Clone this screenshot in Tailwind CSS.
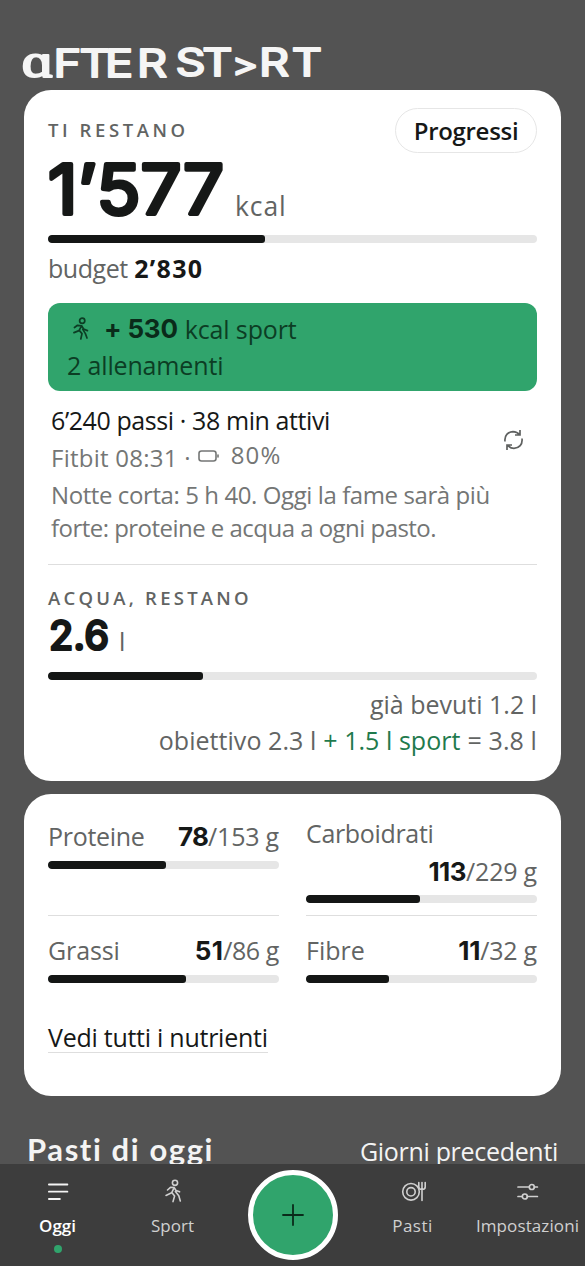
<!DOCTYPE html>
<html lang="it">
<head>
<meta charset="utf-8">
<title>After Start</title>
<script src="https://cdn.jsdelivr.net/npm/@tailwindcss/browser@4"></script>
</head>
<body class="bg-[#535353]">
<div class="relative h-[1266px] w-[585px] overflow-hidden bg-[#535353] font-['Open_Sans',sans-serif] text-[25px] text-[#626463]">

  <header class="h-[90px]">
    <svg class="block" width="585" height="90" viewBox="0 0 585 90" role="img" aria-label="After Start">
      <g transform="scale(1.25 1)" fill="#f5f5f5" stroke="#f5f5f5" stroke-width="1.9" stroke-linejoin="round" font-family="Inter" font-weight="400" font-size="37.500">
        <text y="76.8" x="17.4 42.9 63.7 84.1 109.7"><tspan font-family="Open Sans" font-size="49">ɑ</tspan>FTER</text>
        <text y="75.6" x="140.4 161.9 185.4 207.3 233.5">ST<tspan font-size="32">&gt;</tspan>RT</text>
      </g>
    </svg>
  </header>

  <main class="px-6">
    <section class="h-[691px] rounded-[27px] bg-white px-6 pt-[18px]">
      <div class="flex h-[45px] items-start justify-between">
        <h2 class="text-[18.5px] leading-[43px] font-semibold tracking-[3.57px]">TI RESTANO</h2>
        <button class="flex h-[45px] w-[142px] items-center justify-center rounded-full border-[1.5px] border-[#e6e6e6] text-[24px] font-semibold tracking-[-0.3px] text-[#161817]">Progressi</button>
      </div>
      <div class="flex h-[82px] items-start">
        <svg width="187" height="74" viewBox="0 0 187 74">
          <text x="0" y="61" textLength="176" lengthAdjust="spacingAndGlyphs" font-family="Inter" font-weight="400" font-size="69" fill="#161817" stroke="#161817" stroke-width="4" stroke-linejoin="round">1’577</text>
        </svg>
        <span class="mt-[26px] text-[26.5px] leading-[54px] tracking-[0.9px]">kcal</span>
      </div>
      <div class="h-2 overflow-hidden rounded-[4px] bg-[#e6e6e6]"><div class="h-full rounded-[3px] bg-[#141615]" style="width:216.5px"></div></div>
      <p class="mt-2 leading-[34px]"><span class="tracking-[-0.45px]">budget</span> <b class="tracking-[1.3px] text-[#161817]">2’830</b></p>

      <div class="mt-[18px] h-[88px] rounded-[12px] bg-[#30a46c] pt-2 pl-[18px] text-[#0c3d24]">
        <div class="flex items-center leading-[36px]">
          <svg class="mr-[13px] ml-[7px]" width="18" height="24" viewBox="0 0 18 24" fill="none" stroke="#0c3d24" stroke-width="1.7" stroke-linecap="round" stroke-linejoin="round"><circle cx="9.200" cy="3.800" r="2.600"/><path d="M1.500 10.500 4.500 8.300 8.600 8.800 10.600 12 14.400 13.600M8.600 8.800 6 13.600 1 15.600M6.200 13.400 9 16.600 7.800 22M9.800 12.400 12.400 16.600 14 21"/></svg>
          <b class="mr-[7px] font-[Inter] text-[26px] tracking-[-0.2px] text-[#0a2b1a]">+ 530</b><span class="tracking-[-0.14px]">kcal sport</span>
        </div>
        <p class="pl-px leading-[37px] tracking-[-0.15px]">2 allenamenti</p>
      </div>

      <div class="mt-[11px] flex items-center justify-between pl-[3px]">
        <div>
          <p class="leading-[36px] tracking-[-0.41px] text-[#161817]">6’240 passi · 38 min attivi</p>
          <div class="flex items-start text-[24px] leading-[40px] text-[#747675]">
            <span class="tracking-[0.25px]">Fitbit 08:31 ·</span>
            <svg class="mt-[12px] ml-[7px]" width="22" height="13" viewBox="0 0 22 13" fill="none" stroke="#747675" stroke-width="1.6" stroke-linecap="round"><rect x="1" y="1" width="17" height="10" rx="2.500"/><path d="M20 5v2"/></svg>
            <span class="-mt-[3px] ml-[11px] tracking-[1.1px]">80%</span>
          </div>
        </div>
        <svg class="mr-[13px]" width="21" height="22" viewBox="0 0 21 22" fill="none" stroke="#5f6160" stroke-width="1.7"><path d="M2 12.500C1.200 6.500 5 2.900 10 2.700c3 0 5 1.200 6.800 3.300M17 1v5h-5M19 9.500C19.800 15.500 16 19.100 11 19.300c-3 0-5-1.200-6.800-3.300M4 21v-5h5"/></svg>
      </div>
      <p class="pl-[3px] text-[24px] leading-[33px] text-[#747675]"><span class="tracking-[-0.41px]">Notte corta: 5 h 40. Oggi la fame sarà più</span><br><span class="tracking-[-0.53px]">forte: proteine e acqua a ogni pasto.</span></p>

      <div class="mt-5 h-px bg-[#dedede]"></div>
      <h2 class="mt-5 text-[18.5px] leading-[26px] font-semibold tracking-[3.25px]">ACQUA, RESTANO</h2>
      <div class="flex h-[61px] items-start">
        <svg width="70" height="50" viewBox="0 0 70 50">
          <text x="1" y="38.500" textLength="60" lengthAdjust="spacingAndGlyphs" font-family="Inter" font-weight="500" font-size="41" fill="#161817" stroke="#161817" stroke-width="2.200" stroke-linejoin="round">2.6</text>
        </svg>
        <span class="mt-[12px] ml-px text-[25px] leading-[36px]">l</span>
      </div>
      <div class="h-2 overflow-hidden rounded-[4px] bg-[#e6e6e6]"><div class="h-full rounded-[3px] bg-[#141615]" style="width:154.5px"></div></div>
      <div class="mt-[6px] flex flex-col items-end leading-[36px]">
        <p>già bevuti 1.2 l</p>
        <p class="flex gap-[7px]"><span class="tracking-[0.05px]">obiettivo 2.3 l</span><span class="tracking-[0.05px] text-[#1f7a4d]">+ 1.5 l sport</span><span class="tracking-[0.1px]">= 3.8 l</span></p>
      </div>
    </section>

    <section class="mt-[13px] h-[302px] rounded-[27px] bg-white px-6">
      <div class="grid grid-cols-2 gap-x-[27px]">
        <div class="h-[122px] border-b border-[#dedede] pt-[24px]">
          <div class="flex h-[36px] justify-between leading-[36px]"><span class="tracking-[-0.3px]">Proteine</span><span><b class="font-[Inter] text-[26px] tracking-[-0.8px] text-[#161817]">78</b><span class="tracking-[-0.2px]">/153 g</span></span></div>
          <div class="mt-[7px] h-2 overflow-hidden rounded-[4px] bg-[#e6e6e6]"><div class="h-full rounded-[3px] bg-[#141615]" style="width:117.5px"></div></div>
        </div>
        <div class="h-[122px] border-b border-[#dedede] pt-[21px]">
          <p class="h-[38px] leading-[37px] tracking-[-0.33px]">Carboidrati</p>
          <p class="h-[37px] text-right leading-[37px]"><b class="font-[Inter] text-[26px] tracking-[-0.500px] text-[#161817]">113</b><span class="tracking-[-0.2px]">/229 g</span></p>
          <div class="mt-[5px] h-2 overflow-hidden rounded-[4px] bg-[#e6e6e6]"><div class="h-full rounded-[3px] bg-[#141615]" style="width:114px"></div></div>
        </div>
        <div class="pt-[16px]">
          <div class="flex h-[36px] justify-between leading-[36px]"><span class="tracking-[-0.1px]">Grassi</span><span><b class="font-[Inter] text-[26px] tracking-[0.300px] text-[#161817]">51</b><span class="tracking-[-0.4px]">/86 g</span></span></div>
          <div class="mt-[7px] h-2 overflow-hidden rounded-[4px] bg-[#e6e6e6]"><div class="h-full rounded-[3px] bg-[#141615]" style="width:137.5px"></div></div>
        </div>
        <div class="pt-[16px]">
          <div class="flex h-[36px] justify-between leading-[36px]"><span>Fibre</span><span><b class="font-[Inter] text-[26px] tracking-[-0.300px] text-[#161817]">11</b><span class="tracking-[-0.2px]">/32 g</span></span></div>
          <div class="mt-[7px] h-2 overflow-hidden rounded-[4px] bg-[#e6e6e6]"><div class="h-full rounded-[3px] bg-[#141615]" style="width:83px"></div></div>
        </div>
      </div>
      <a class="mt-[40px] inline-block border-b border-[#dedede] leading-[29px] tracking-[-0.26px] text-[#161817]">Vedi tutti i nutrienti</a>
    </section>

    <div class="mt-[35px] flex items-start justify-between pr-[3px] pl-[3px] leading-[36px] text-[#f4f4f4]">
      <h2 class="font-[Lato] text-[31px] font-bold tracking-[1.6px]">Pasti di oggi</h2>
      <a class="mt-[2px] tracking-[-0.31px]">Giorni precedenti</a>
    </div>
  </main>

  <nav class="absolute inset-x-0 bottom-0 grid h-[102px] grid-cols-[115px_115px_125px_115px_115px] bg-[#3d3d3d] text-[17px] leading-[24px] font-medium text-[#d0d0d0]">
    <a class="flex flex-col items-center pt-[15px] font-semibold text-white">
      <svg width="24" height="24" viewBox="0 0 24 24" fill="none" stroke="#f4f4f4" stroke-width="1.8" stroke-linecap="round"><path d="M2.900 5.500h18.500M2.900 12.700h18.500M2.900 20h11"/></svg>
      <span class="mt-[11px]">Oggi</span>
      <span class="mt-[7px] size-2 rounded-full bg-[#30a46c]"></span>
    </a>
    <a class="flex flex-col items-center pt-[15px]">
      <svg width="18" height="24" viewBox="0 0 18 24" fill="none" stroke="#d0d0d0" stroke-width="1.600" stroke-linecap="round" stroke-linejoin="round"><circle cx="11" cy="3.800" r="2.600"/><path d="M3.500 11 6.500 8.300 10.200 8.600 12 11.400 15.600 12.800M10.200 8.600 7.600 13.800 2 16.500M7.800 13.600 10.600 17 9 22.600M11.400 12.400 14.800 16.800 16.300 22"/></svg>
      <span class="mt-[11px]">Sport</span>
    </a>
    <div class="flex justify-center pt-[6px]">
      <button class="flex size-[90px] items-center justify-center rounded-full border-[5px] border-white bg-[#30a46c]">
        <svg width="24" height="24" viewBox="0 0 24 24" fill="none" stroke="#0a2b1a" stroke-width="1.800" stroke-linecap="round"><path d="M12 2v20M2 12h20"/></svg>
      </button>
    </div>
    <a class="flex flex-col items-center pt-[15px]">
      <svg width="26" height="24" viewBox="0 0 26 24" fill="none" stroke="#d0d0d0" stroke-width="1.600" stroke-linecap="round" stroke-linejoin="round"><circle cx="11" cy="12.800" r="8.300"/><circle cx="11" cy="12.800" r="4.200"/><path d="M22 3.500v18M18.800 3.500v4.500q0 2.500 3.200 2.500t3.200-2.500V3.500"/></svg>
      <span class="mt-[11px] tracking-[0.500px]">Pasti</span>
    </a>
    <a class="flex flex-col items-center pt-[15px]">
      <svg width="24" height="24" viewBox="0 0 24 24" fill="none" stroke="#d0d0d0" stroke-width="1.700" stroke-linecap="round"><path d="M2 8h11.200M18.400 8h3M2 17.500h4.200M11.400 17.500h10"/><circle cx="15.800" cy="8" r="2.500"/><circle cx="8.800" cy="17.500" r="2.500"/></svg>
      <span class="mt-[11px] tracking-[0.100px]">Impostazioni</span>
    </a>
  </nav>
</div>
</body>
</html>
